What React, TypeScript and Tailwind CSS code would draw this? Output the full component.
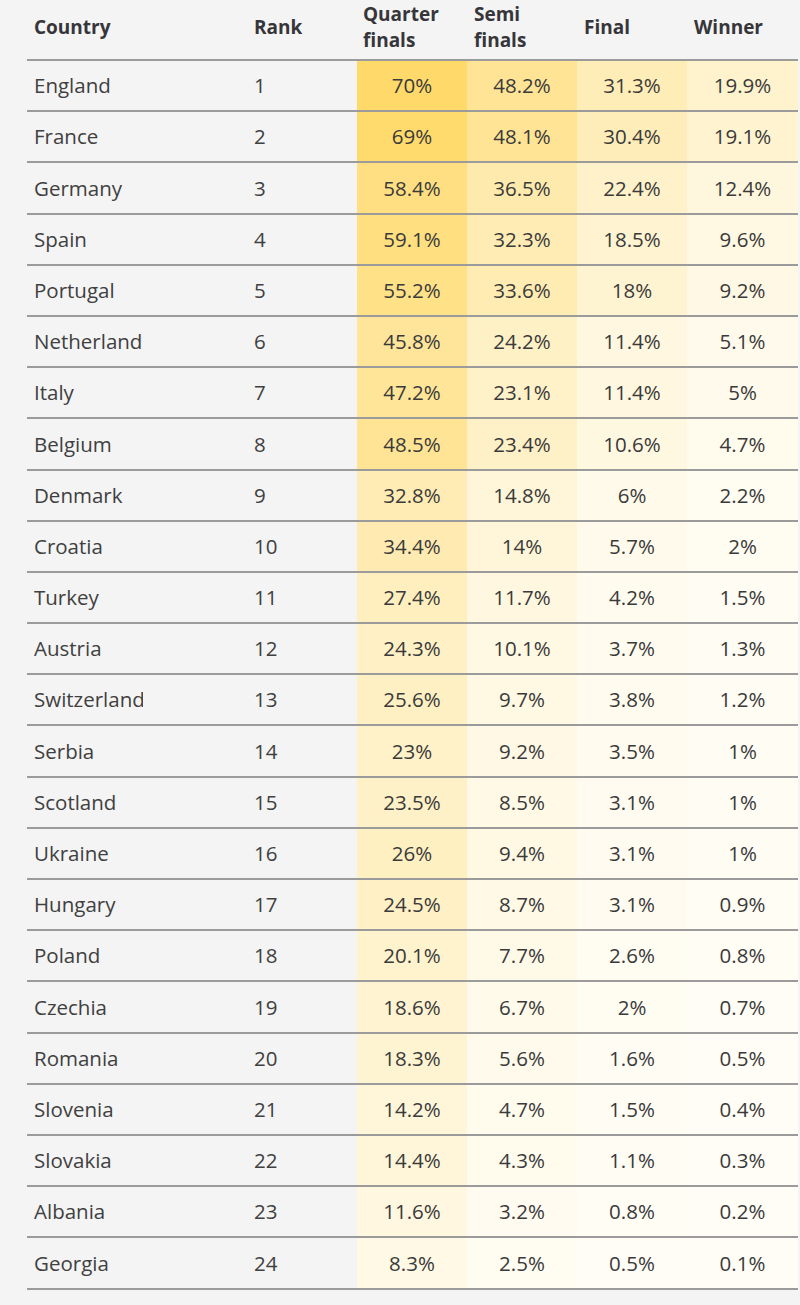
import React from "react";

interface Row {
  country: string;
  rank: number;
  quarter: number;
  semi: number;
  final: number;
  winner: number;
}

const rows: Row[] = [
  { country: "England", rank: 1, quarter: 70, semi: 48.2, final: 31.3, winner: 19.9 },
  { country: "France", rank: 2, quarter: 69, semi: 48.1, final: 30.4, winner: 19.1 },
  { country: "Germany", rank: 3, quarter: 58.4, semi: 36.5, final: 22.4, winner: 12.4 },
  { country: "Spain", rank: 4, quarter: 59.1, semi: 32.3, final: 18.5, winner: 9.6 },
  { country: "Portugal", rank: 5, quarter: 55.2, semi: 33.6, final: 18, winner: 9.2 },
  { country: "Netherland", rank: 6, quarter: 45.8, semi: 24.2, final: 11.4, winner: 5.1 },
  { country: "Italy", rank: 7, quarter: 47.2, semi: 23.1, final: 11.4, winner: 5 },
  { country: "Belgium", rank: 8, quarter: 48.5, semi: 23.4, final: 10.6, winner: 4.7 },
  { country: "Denmark", rank: 9, quarter: 32.8, semi: 14.8, final: 6, winner: 2.2 },
  { country: "Croatia", rank: 10, quarter: 34.4, semi: 14, final: 5.7, winner: 2 },
  { country: "Turkey", rank: 11, quarter: 27.4, semi: 11.7, final: 4.2, winner: 1.5 },
  { country: "Austria", rank: 12, quarter: 24.3, semi: 10.1, final: 3.7, winner: 1.3 },
  { country: "Switzerland", rank: 13, quarter: 25.6, semi: 9.7, final: 3.8, winner: 1.2 },
  { country: "Serbia", rank: 14, quarter: 23, semi: 9.2, final: 3.5, winner: 1 },
  { country: "Scotland", rank: 15, quarter: 23.5, semi: 8.5, final: 3.1, winner: 1 },
  { country: "Ukraine", rank: 16, quarter: 26, semi: 9.4, final: 3.1, winner: 1 },
  { country: "Hungary", rank: 17, quarter: 24.5, semi: 8.7, final: 3.1, winner: 0.9 },
  { country: "Poland", rank: 18, quarter: 20.1, semi: 7.7, final: 2.6, winner: 0.8 },
  { country: "Czechia", rank: 19, quarter: 18.6, semi: 6.7, final: 2, winner: 0.7 },
  { country: "Romania", rank: 20, quarter: 18.3, semi: 5.6, final: 1.6, winner: 0.5 },
  { country: "Slovenia", rank: 21, quarter: 14.2, semi: 4.7, final: 1.5, winner: 0.4 },
  { country: "Slovakia", rank: 22, quarter: 14.4, semi: 4.3, final: 1.1, winner: 0.3 },
  { country: "Albania", rank: 23, quarter: 11.6, semi: 3.2, final: 0.8, winner: 0.2 },
  { country: "Georgia", rank: 24, quarter: 8.3, semi: 2.5, final: 0.5, winner: 0.1 },
];

// white-ish cream -> warm yellow, scaled on the top value
const heat = (v: number) => {
  const t = Math.min(v / 70, 1);
  const g = Math.round(253 - t * 36);
  const b = Math.round(246 - t * 140);
  return `rgb(255, ${g}, ${b})`;
};

const HeatCell = ({ value }: { value: number }) => (
  <div
    className="flex items-center justify-center text-[#3a3a3a]"
    style={{ backgroundColor: heat(value) }}
  >
    {value}%
  </div>
);

const App = () => {
  return (
    <div
      className="min-h-[1305px] w-[800px] bg-[#f4f4f4] pl-[27px] pr-[2px]"
      style={{ fontFamily: '"Open Sans", "Noto Sans", sans-serif' }}
    >
      <div className="grid grid-cols-[220px_110px_110px_110px_110px_1fr] h-[61px] border-b-2 border-[#9b9b9b] pb-[6px] items-center text-[19px] leading-[26px] font-bold text-[#36363a]">
        <div className="px-[7px]">Country</div>
        <div className="px-[7px]">Rank</div>
        <div className="px-[6px]">
          Quarter
          <br />
          finals
        </div>
        <div className="px-[7px]">
          Semi
          <br />
          finals
        </div>
        <div className="px-[7px]">Final</div>
        <div className="px-[7px]">Winner</div>
      </div>
      {rows.map((row) => (
        <div
          key={row.country}
          className="grid grid-cols-[220px_110px_110px_110px_110px_1fr] h-[51.2px] border-b-2 border-[#9b9b9b] text-[20.5px] text-[#404040]"
        >
          <div className="flex items-center px-[7px]">
            <span className="block w-[109px] overflow-hidden whitespace-nowrap">
              {row.country}
            </span>
          </div>
          <div className="flex items-center px-[7px]">{row.rank}</div>
          <HeatCell value={row.quarter} />
          <HeatCell value={row.semi} />
          <HeatCell value={row.final} />
          <HeatCell value={row.winner} />
        </div>
      ))}
    </div>
  );
};

export default App;
